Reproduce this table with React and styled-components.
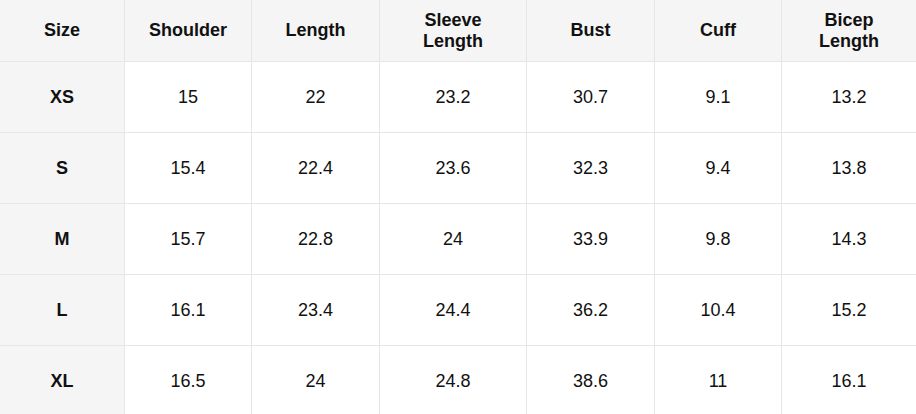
import React from 'react';
import styled, { createGlobalStyle } from 'styled-components';

const GlobalStyle = createGlobalStyle`
  html, body {
    margin: 0;
    padding: 0;
    background: #fff;
    overflow: hidden;
  }
  body {
    font-family: "Liberation Sans", Arial, sans-serif;
    color: #111;
  }
`;

const Table = styled.table`
  width: 916px;
  table-layout: fixed;
  border-collapse: separate;
  border-spacing: 0;
  font-size: 18px;
`;

const Cell = styled.td`
  height: 70px;
  padding: 0 15px;
  text-align: center;
  vertical-align: middle;
  border-right: ${(props) => (props.last ? 'none' : '1px solid #e6e6e6')};
  border-bottom: 1px solid #e6e6e6;
  background: #fff;
  line-height: 21px;
`;

const HeadCell = styled(Cell).attrs({ as: 'th' })`
  height: 61px;
  font-weight: bold;
  background: #f5f5f5;
`;

const SizeCell = styled(Cell)`
  font-weight: bold;
  background: #f5f5f5;
`;

const widths = [125, 127, 128, 147, 128, 127, 134];

const headers = ['Size', 'Shoulder', 'Length', 'Sleeve Length', 'Bust', 'Cuff', 'Bicep Length'];

const rows = [
  ['XS', '15', '22', '23.2', '30.7', '9.1', '13.2'],
  ['S', '15.4', '22.4', '23.6', '32.3', '9.4', '13.8'],
  ['M', '15.7', '22.8', '24', '33.9', '9.8', '14.3'],
  ['L', '16.1', '23.4', '24.4', '36.2', '10.4', '15.2'],
  ['XL', '16.5', '24', '24.8', '38.6', '11', '16.1'],
];

const App = () => {
  const lastIdx = headers.length - 1;
  return (
    <>
      <GlobalStyle />
      <Table>
        <colgroup>
          {widths.map((w, i) => (
            <col key={i} style={{ width: w }} />
          ))}
        </colgroup>
        <thead>
          <tr>
            {headers.map((h, i) => (
              <HeadCell key={h} last={i === lastIdx}>
                {h}
              </HeadCell>
            ))}
          </tr>
        </thead>
        <tbody>
          {rows.map((row) => (
            <tr key={row[0]}>
              {row.map((v, i) =>
                i === 0 ? (
                  <SizeCell key={i}>{v}</SizeCell>
                ) : (
                  <Cell key={i} last={i === lastIdx}>
                    {v}
                  </Cell>
                )
              )}
            </tr>
          ))}
        </tbody>
      </Table>
    </>
  );
};

export default App;
